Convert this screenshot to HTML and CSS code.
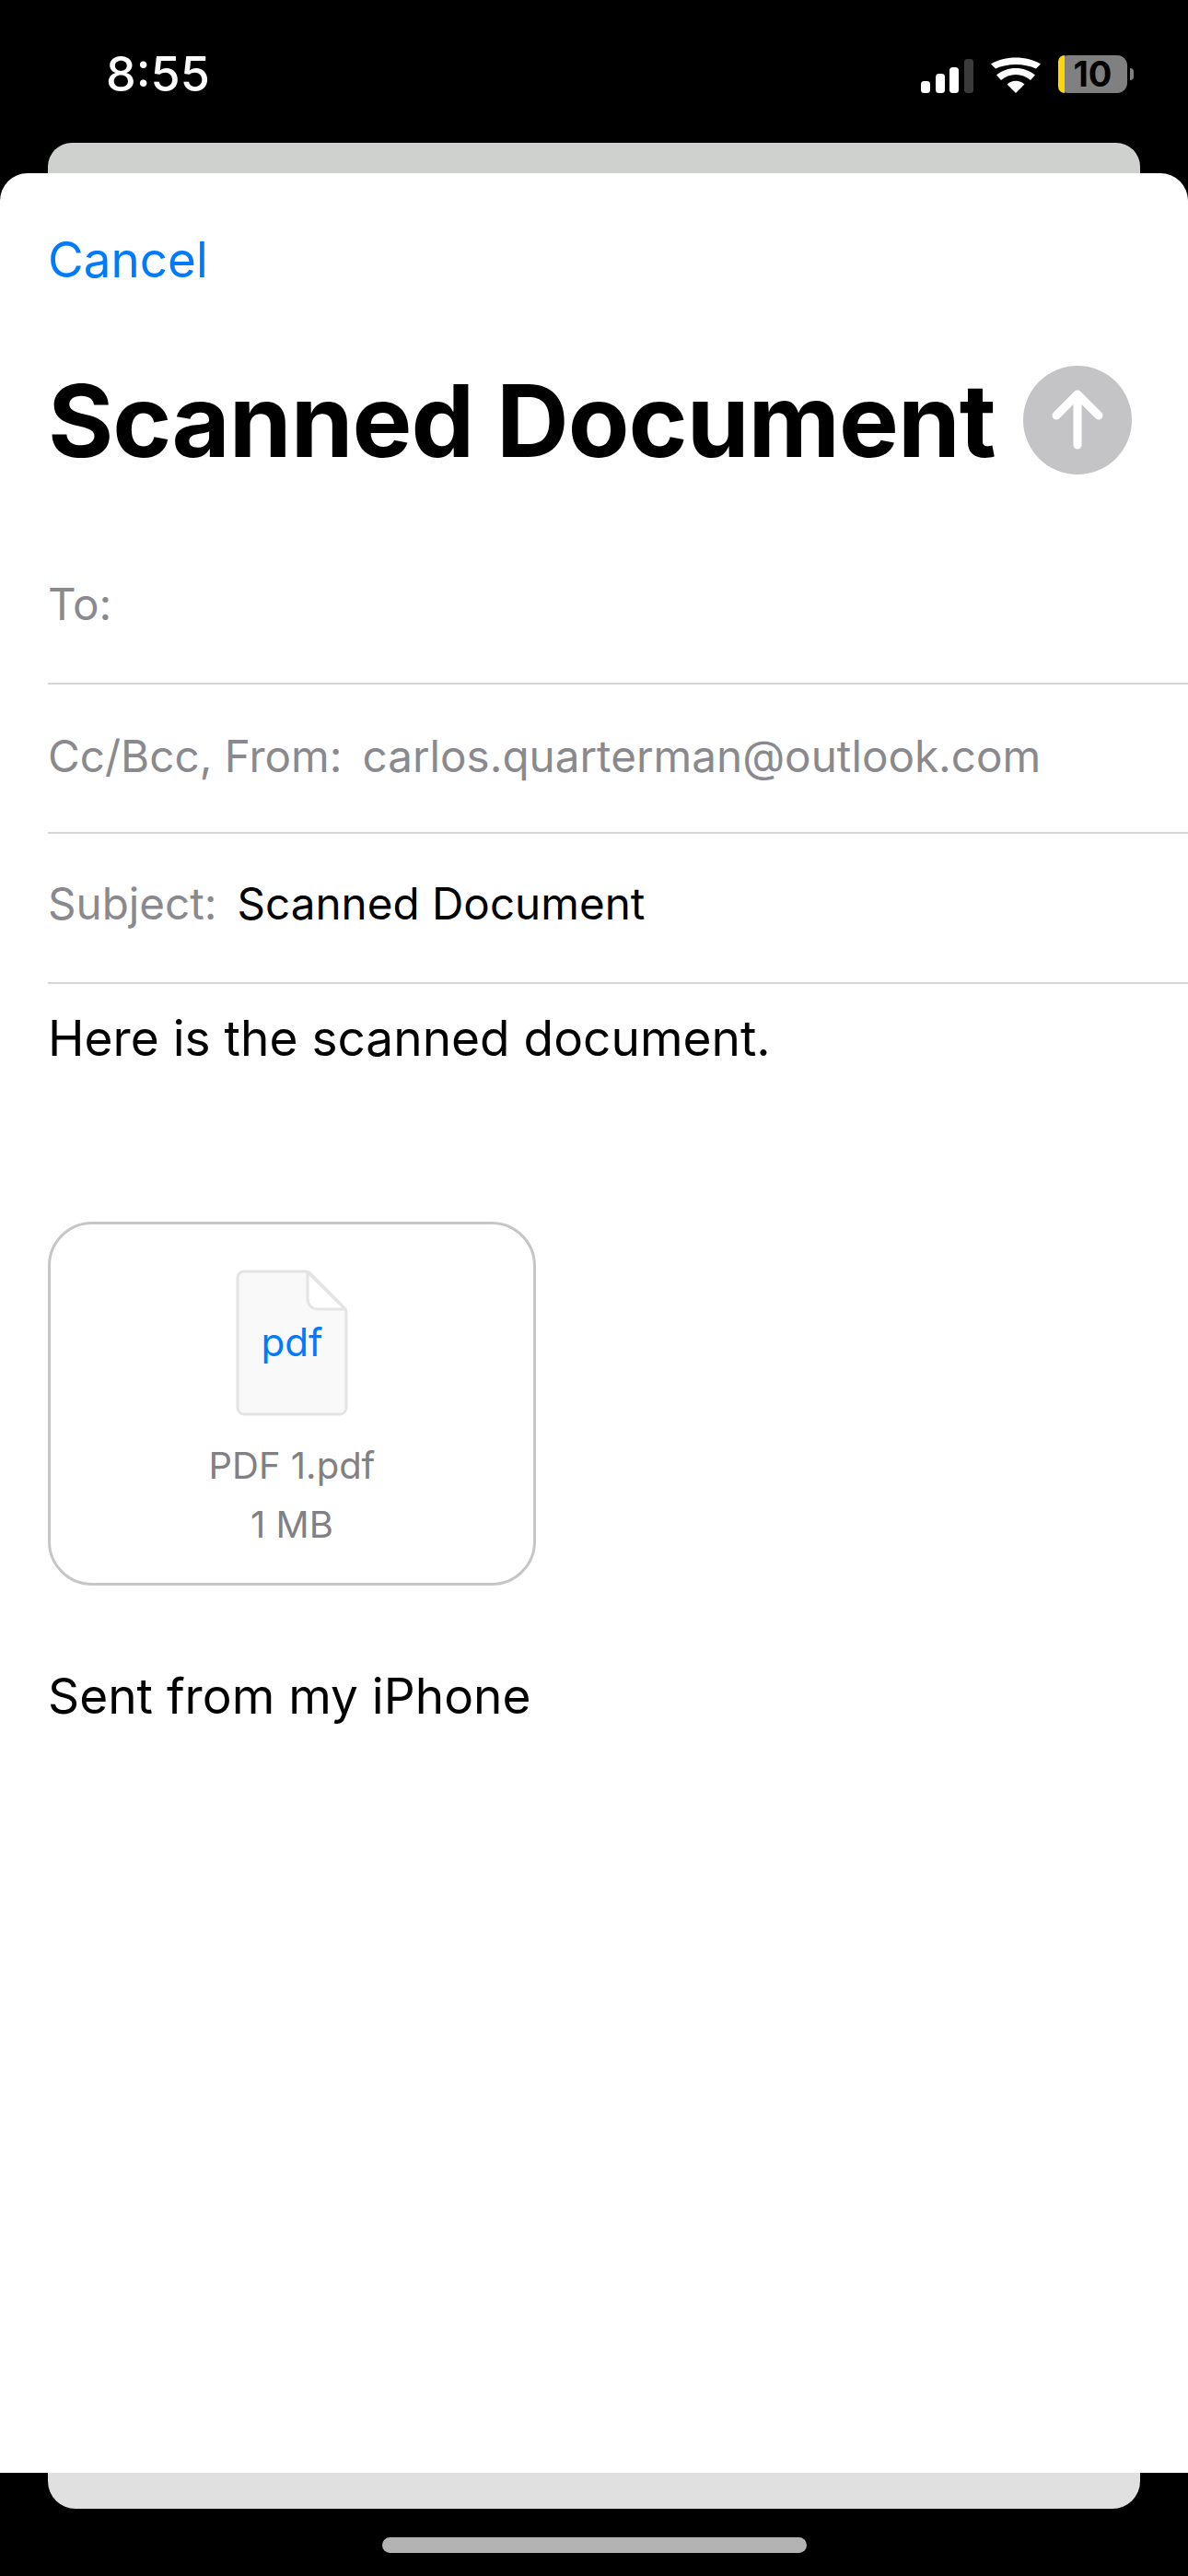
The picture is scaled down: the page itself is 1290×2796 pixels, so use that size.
FILE: index.html
```html
<!DOCTYPE html>
<html lang="en">
<head>
    <meta charset="UTF-8">
    <meta name="viewport" content="width=device-width, initial-scale=1.0">
    <title>Scanned Document</title>
    <link rel="stylesheet" href="styles.css">
</head>
<body>
    <div class="status-bar">
        <span class="status-time">8:55</span>
        <div class="status-icons">
            <svg class="signal" width="57" height="37" viewBox="0 0 57 37">
                <rect x="0" y="24" width="10" height="13" rx="3.5" fill="#fff"/>
                <rect x="16" y="16" width="10" height="21" rx="3.5" fill="#fff"/>
                <rect x="31" y="9" width="10" height="28" rx="3.5" fill="#fff"/>
                <rect x="47" y="0" width="10" height="37" rx="3.5" fill="#3a3a3a"/>
            </svg>
            <svg class="wifi" width="54" height="39" viewBox="0 0 54 39">
                <path d="M27 39 L17.500 29.500 C23 24.500 31 24.500 36.500 29.500 Z" fill="#fff"/>
                <path d="M11 23 L6 17.500 C17.500 7.500 36.500 7.500 48 17.500 L43 23 C34 15 20 15 11 23 Z" fill="#fff" transform="translate(0 2)"/>
                <path d="M5 11.500 L0 6.500 C15 -2.800 39 -2.800 54 6.500 L49 11.500 C36 5.500 18 5.500 5 11.500 Z" fill="#fff" transform="translate(0 1)"/>
            </svg>
            <div class="battery">
                <div class="battery-body">
                    <span class="battery-level"></span>
                    <span class="battery-text">10</span>
                </div>
                <span class="battery-nub"></span>
            </div>
        </div>
    </div>

    <div class="peek peek-top"></div>

    <div class="sheet">
        <a class="cancel">Cancel</a>

        <div class="title-row">
            <h1 class="title">Scanned Document</h1>
            <div class="send-btn">
                <svg width="118" height="118" viewBox="0 0 118 118">
                    <path d="M59 86 V33 M36 54 L59 31 L82 54" fill="none" stroke="#fff" stroke-width="9" stroke-linecap="round" stroke-linejoin="round"/>
                </svg>
            </div>
        </div>

        <div class="field field-to">
            <span class="field-label">To:</span>
        </div>
        <div class="field field-from">
            <span class="field-label">Cc/Bcc, From:</span>
            <span class="field-label">carlos.quarterman@outlook.com</span>
        </div>
        <div class="field">
            <span class="field-label">Subject:</span>
            <span class="field-value">Scanned Document</span>
        </div>

        <div class="body-text">Here is the scanned document.</div>

        <div class="attachment">
            <div class="doc-icon">
                <svg width="122" height="159" viewBox="0 0 122 159">
                    <!-- page outline with the corner cut off -->
                    <path d="M9 2 H76 Q79 2 81 4 L118 42 Q120 44 120 47 V150 A7 7 0 0 1 113 157 H9 A7 7 0 0 1 2 150 V9 A7 7 0 0 1 9 2 Z" fill="#f9f9f9" stroke="#e4e4e4" stroke-width="3" stroke-linejoin="round"/>
                    <!-- folded corner -->
                    <path d="M78 3 V32 A11 11 0 0 0 89 43 H119 Z" fill="#fff" stroke="#e4e4e4" stroke-width="3" stroke-linejoin="round"/>
                </svg>
                <span class="doc-type">pdf</span>
            </div>
            <div class="attachment-name">PDF 1.pdf</div>
            <div class="attachment-size">1 MB</div>
        </div>

        <div class="signature">Sent from my iPhone</div>
    </div>

    <div class="peek peek-bottom"></div>

    <div class="home-area">
        <div class="home-bar"></div>
    </div>
</body>
</html>
```

FILE: styles.css
```css
body {
    font-family: 'Inter', 'Liberation Sans', sans-serif;
    margin: 0;
    width: 1290px;
    height: 2796px;
    overflow: hidden;
    background-color: #000;
    color: #000;
}

.status-bar {
    height: 155px;
    display: flex;
    justify-content: space-between;
    align-items: flex-start;
    box-sizing: border-box;
    padding: 56px 59px 0 115px;
    color: #fff;
}

.status-time {
    font-size: 52px;
    font-weight: 500;
    line-height: 50px;
}

.status-icons {
    display: flex;
    align-items: flex-end;
    gap: 19px;
    margin-top: 4px;
}

.battery {
    display: flex;
    align-items: center;
    gap: 3px;
}

.battery-body {
    width: 75px;
    height: 41px;
    border-radius: 11px;
    background-color: #808080;
    display: flex;
    position: relative;
    justify-content: center;
    align-items: center;
}

.battery-level {
    position: absolute;
    left: 0;
    top: 0;
    bottom: 0;
    width: 7px;
    border-radius: 11px 0 0 11px;
    background-color: #ffd60a;
}

.battery-text {
    font-size: 38px;
    font-weight: 700;
    line-height: 41px;
    color: #000;
}

.battery-nub {
    width: 4px;
    height: 13px;
    border-radius: 0 7px 7px 0;
    background-color: #808080;
}

.peek {
    margin: 0 52px;
    width: 1186px;
}

.peek-top {
    height: 33px;
    background-color: #cfd1ce;
    border-radius: 26px 26px 0 0;
}

.peek-bottom {
    height: 39px;
    background-color: #e0e0e0;
    border-radius: 0 0 30px 30px;
}

.sheet {
    height: 2496px;
    background-color: #fff;
    border-radius: 30px 30px 0 0;
    box-sizing: border-box;
    padding-left: 52px;
    overflow: hidden;
}

.cancel {
    display: block;
    font-size: 53px;
    line-height: 66px;
    padding-top: 61px;
    color: #007aff;
}

.title-row {
    display: flex;
    align-items: center;
    justify-content: space-between;
    padding-right: 61px;
    margin-top: 82px;
    height: 118px;
}

.title {
    margin: 0;
    font-size: 109px;
    font-weight: 700;
    line-height: 118px;
    letter-spacing: -1px;
}

.send-btn {
    width: 118px;
    height: 118px;
    border-radius: 50%;
    background-color: #c4c4c6;
}

.send-btn svg {
    display: block;
}

.field {
    height: 162.500px;
    box-sizing: border-box;
    padding-bottom: 10px;
    border-bottom: 2px solid #d6d6d8;
    display: flex;
    align-items: center;
    font-size: 47.600px;
    gap: 22px;
}

.field-to {
    margin-top: 65px;
}

.field-from {
    padding-bottom: 5px;
}

.field-label {
    color: #8a8a8e;
}

.field-value {
    color: #000;
}

.body-text {
    font-size: 53.200px;
    line-height: 62px;
    margin-top: 28px;
}

.attachment {
    width: 530px;
    height: 395px;
    box-sizing: border-box;
    margin-top: 168px;
    border: 3px solid #c6c6c8;
    border-radius: 48px;
    display: flex;
    flex-direction: column;
    align-items: center;
    padding-top: 49px;
    color: #808085;
    font-size: 40px;
    line-height: 64px;
}

.doc-icon {
    position: relative;
    width: 122px;
    height: 159px;
    margin-bottom: 22px;
}

.doc-icon svg {
    display: block;
}

.doc-type {
    position: absolute;
    left: 0;
    right: 0;
    top: 53px;
    text-align: center;
    font-size: 42px;
    line-height: 52px;
    color: #007aff;
}

.signature {
    font-size: 53.200px;
    line-height: 62px;
    margin-top: 89px;
}

.home-area {
    display: flex;
    justify-content: center;
    padding-top: 31px;
}

.home-bar {
    width: 461px;
    height: 17px;
    border-radius: 9px;
    background-color: #b3b3b3;
}
```
